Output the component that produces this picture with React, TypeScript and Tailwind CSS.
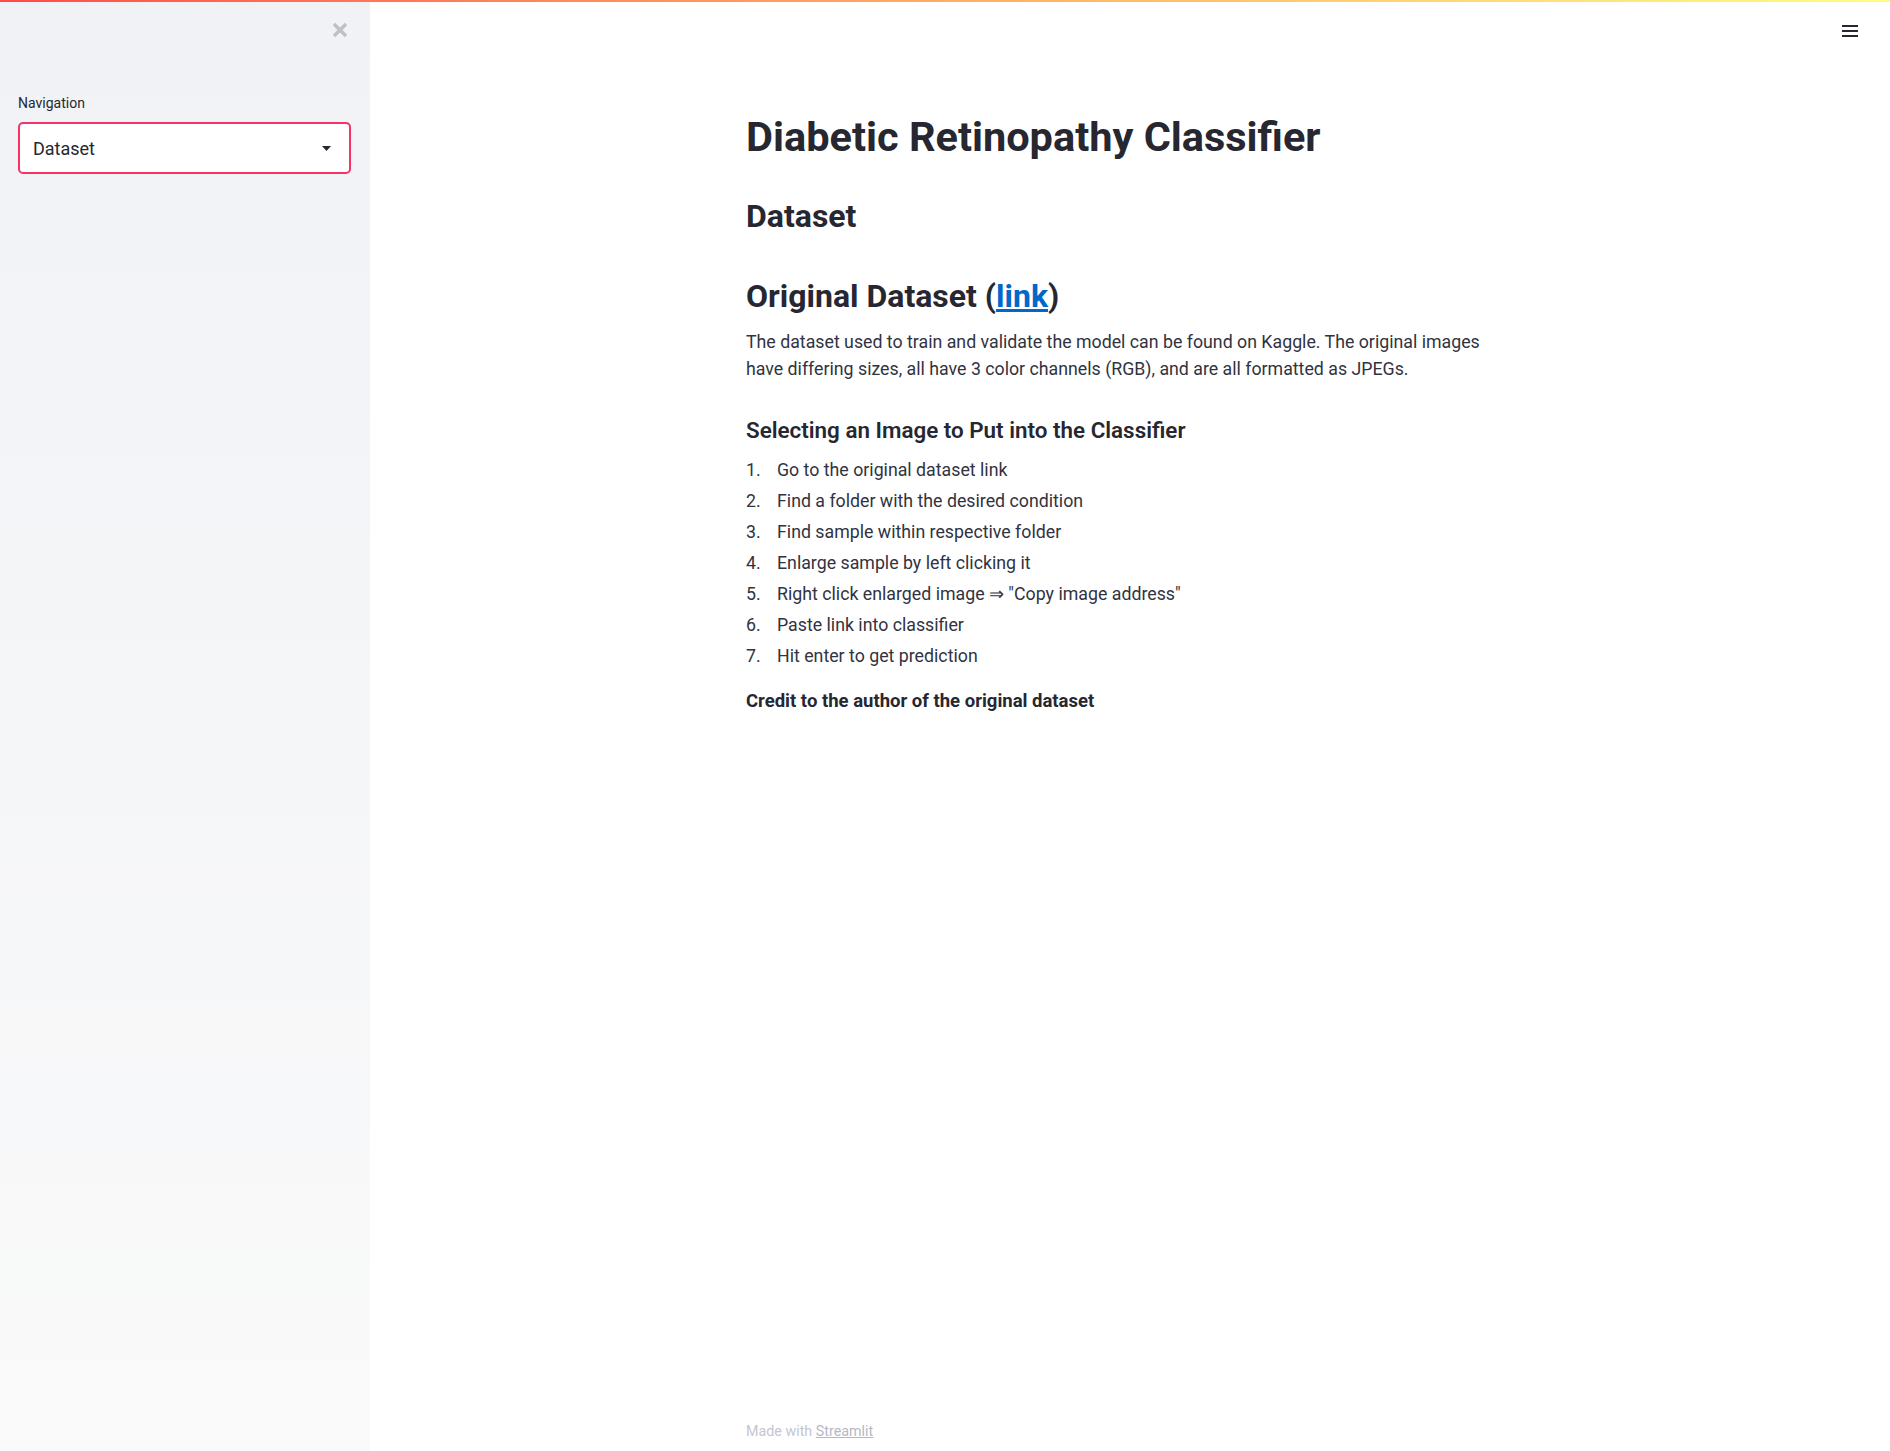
import React from "react";

const steps = [
  "Go to the original dataset link",
  "Find a folder with the desired condition",
  "Find sample within respective folder",
  "Enlarge sample by left clicking it",
  'Right click enlarged image \u21D2 "Copy image address"',
  "Paste link into classifier",
  "Hit enter to get prediction",
];

function Sidebar() {
  return (
    <aside className="w-[370px] shrink-0 min-h-[1451px] bg-gradient-to-b from-[#f0f2f6] to-[#fafafa] px-[18px]">
      <div className="flex justify-end pt-[21px] pr-[3px] h-[93px]">
        {/* close */}
        <svg width="18" height="18" viewBox="0 0 18 18" className="text-[#bfc0c4]">
          <path d="M3 3 L15 15 M15 3 L3 15" stroke="currentColor" strokeWidth="3.4" />
        </svg>
      </div>
      <label className="block text-[14px] leading-[20px] text-[#262730] mb-[9px]">Navigation</label>
      <div className="h-[52px] w-[333px] rounded-[5px] border-2 border-[#f63366] bg-white flex items-center justify-between pl-[13px] pr-[18px]">
        <span className="text-[18px] text-[#262730]">Dataset</span>
        <svg width="9" height="5" viewBox="0 0 9 5">
          <path d="M0 0 H9 L4.5 5 Z" fill="#262730" />
        </svg>
      </div>
    </aside>
  );
}

export default function App() {
  return (
    <div
      className="relative w-full min-h-[1451px] bg-white flex"
      style={{ fontFamily: "Roboto, 'Noto Sans', sans-serif" }}
    >
      {/* decoration bar */}
      <div className="absolute top-0 left-0 right-0 h-[2px] bg-gradient-to-r from-[#ff4b4b] to-[#fffd80]" />

      <Sidebar />

      <main className="flex-1 flex flex-col min-h-[1451px]">
        <div className="flex justify-end pt-[24px] pr-[32px] h-[40px]">
          <svg width="16" height="14" viewBox="0 0 16 14">
            <rect x="0" y="1" width="16" height="2" fill="#262730" />
            <rect x="0" y="6" width="16" height="2" fill="#262730" />
            <rect x="0" y="11" width="16" height="2" fill="#262730" />
          </svg>
        </div>

        <div className="w-[768px] mx-auto flex-1 flex flex-col pt-[73px] text-[#262730]">
          <h1 className="text-[41.5px] leading-[48px] font-bold">
            Diabetic Retinopathy Classifier
          </h1>
          <h2 className="mt-[36px] text-[32px] leading-[38px] font-bold">Dataset</h2>
          <h2 className="mt-[42px] text-[32px] leading-[38px] font-bold">
            Original Dataset (
            <a href="#" className="text-[#0068c9] underline">link</a>
            )
          </h2>
          <p className="mt-[14px] max-w-[752px] text-[17.75px] leading-[27px] text-[#31333f]">
            The dataset used to train and validate the model can be found on Kaggle. The original images
            have differing sizes, all have 3 color channels (RGB), and are all formatted as JPEGs.
          </p>
          <h3 className="mt-[33px] text-[22.4px] leading-[29px] font-semibold">
            Selecting an Image to Put into the Classifier
          </h3>
          <ol className="mt-[12px] text-[17.75px] leading-[27px] text-[#31333f]">
            {steps.map((s, i) => (
              <li key={i} className="flex mb-[4px]">
                <span className="w-[31px] shrink-0">{i + 1}.</span>
                <span>{s}</span>
              </li>
            ))}
          </ol>
          <p className="mt-[14px] text-[18.5px] leading-[27px] font-bold">
            Credit to the author of the original dataset
          </p>

          <div className="mt-auto pb-[10px] text-[14.3px] leading-[20px] text-[#c4c6d0]">
            Made with <a href="#" className="underline text-[#b6b8c4]">Streamlit</a>
          </div>
        </div>
      </main>
    </div>
  );
}
